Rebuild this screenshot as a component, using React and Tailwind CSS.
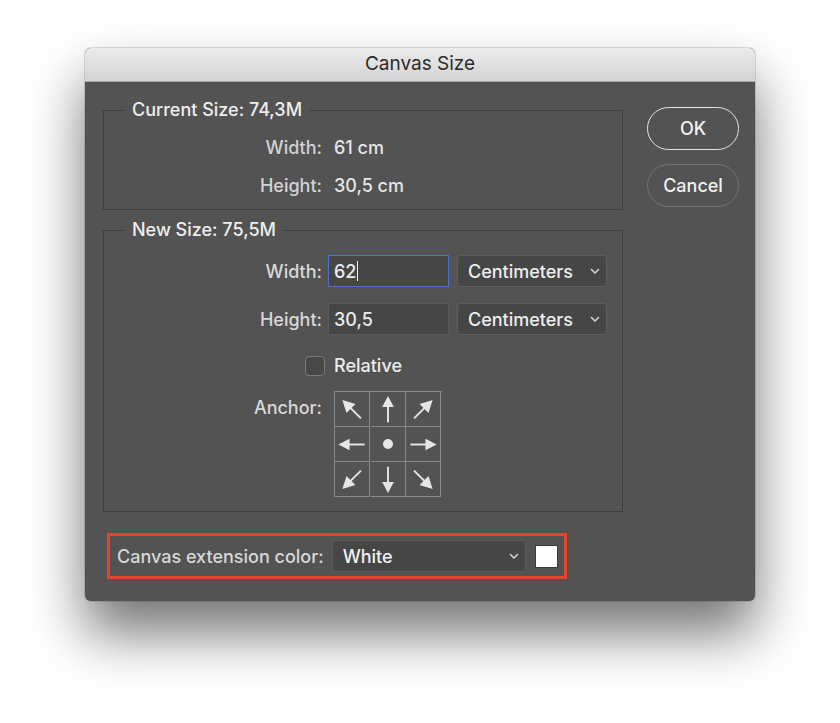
import React from "react";

function Arrow({ dir }) {
  const angles = { n: 0, ne: 45, e: 90, se: 135, s: 180, sw: 225, w: 270, nw: 315 };
  const a = angles[dir];
  const diag = dir.length === 2;
  const len = diag ? 13 : 13;
  const hw = diag ? 6.5 : 6;
  const hl = diag ? 11.5 : 10.5;
  return (
    <svg width="35" height="35" viewBox="-17.5 -17.5 35 35">
      <g transform={`rotate(${a})`} fill="#e6e6e6" stroke="#e6e6e6">
        <line x1="0" y1={len} x2="0" y2={-len + 7} strokeWidth="2" />
        <polygon points={`0,${-len - 1} ${-hw},${-len + hl} ${hw},${-len + hl}`} stroke="none" />
      </g>
    </svg>
  );
}

function Cell({ children }) {
  return (
    <div className="w-[35px] h-[35px] flex items-center justify-center border-r border-b border-[#8a8a8a]">
      {children}
    </div>
  );
}

function Chevron() {
  return (
    <svg width="10" height="7" viewBox="0 0 10 7">
      <path d="M1.5 1.5 L5 5 L8.5 1.5" fill="none" stroke="#d8d8d8" strokeWidth="1.5" strokeLinecap="round" strokeLinejoin="round" />
    </svg>
  );
}

export default function App() {
  const font = { fontFamily: 'Inter, "Liberation Sans", Arial, sans-serif' };
  return (
    <div className="w-[840px] h-[723px] bg-white overflow-hidden pt-[48px] pl-[85px]" style={font}>
      <div className="w-[670px] h-[553px] rounded-[6px] bg-[#535353] overflow-hidden shadow-[0_32px_55px_rgba(0,0,0,0.55),0_0_0_1px_rgba(0,0,0,0.12)] flex flex-col">
        <div className="h-[34px] shrink-0 bg-gradient-to-b from-[#ebebeb] to-[#d4d4d4] border-b border-[#a9a9a9] flex items-center justify-center text-[19px] text-[#2b2b2b]">
          Canvas Size
        </div>
        <div className="flex pl-[18px] pr-[16px] pt-[18px] font-medium">
          <div className="w-[520px] flex flex-col">
            <fieldset className="border border-[#3e3e3e] h-[110px] pl-0">
              <legend className="ml-[20px] px-[8px] text-[18px] leading-[20px] text-[#ededed]">Current Size: 74,3M</legend>
              <div className="flex flex-col gap-[18px] pt-[18px]">
                <div className="flex items-center text-[18px] leading-[20px]">
                  <span className="w-[218px] text-right text-[#d2d2d2]">Width:</span>
                  <span className="ml-[12px] text-[#e6e6e6]">61 cm</span>
                </div>
                <div className="flex items-center text-[18px] leading-[20px]">
                  <span className="w-[218px] text-right text-[#d2d2d2]">Height:</span>
                  <span className="ml-[12px] text-[#e6e6e6]">30,5 cm</span>
                </div>
              </div>
            </fieldset>
            <fieldset className="mt-[10px] border border-[#3e3e3e] h-[292px]">
              <legend className="ml-[20px] px-[8px] text-[18px] leading-[20px] text-[#ededed]">New Size: 75,5M</legend>
              <div className="flex flex-col pt-[15px]">
                <div className="flex items-center text-[18px]">
                  <span className="w-[218px] text-right text-[#d8d8d8]">Width:</span>
                  <div className="ml-[6px] w-[121px] h-[32px] bg-[#464646] border border-[#4a72c8] flex items-center pl-[5px] text-[#ececec]">
                    62<span className="inline-block w-[1px] h-[20px] bg-[#f0f0f0] ml-[1px]" />
                  </div>
                  <div className="ml-[8px] w-[150px] h-[32px] bg-[#464646] border border-[#5d5d5d] rounded-[3px] flex items-center justify-between pl-[10px] pr-[6px] text-[#ededed]">
                    <span>Centimeters</span>
                    <Chevron />
                  </div>
                </div>
                <div className="flex items-center text-[18px] mt-[16px]">
                  <span className="w-[218px] text-right text-[#d8d8d8]">Height:</span>
                  <div className="ml-[6px] w-[121px] h-[32px] bg-[#464646] border border-[#5a5a5a] flex items-center pl-[5px] text-[#ececec]">
                    30,5
                  </div>
                  <div className="ml-[8px] w-[150px] h-[32px] bg-[#464646] border border-[#5d5d5d] rounded-[3px] flex items-center justify-between pl-[10px] pr-[6px] text-[#ededed]">
                    <span>Centimeters</span>
                    <Chevron />
                  </div>
                </div>
                <div className="flex items-center mt-[17px] text-[18px]">
                  <div className="ml-[201px] w-[20px] h-[20px] rounded-[4px] bg-[#484848] border border-[#7a7a7a]" />
                  <span className="ml-[9px] text-[#ececec]">Relative</span>
                </div>
                <div className="flex items-start mt-[12px] text-[18px]">
                  <span className="w-[218px] text-right text-[#d8d8d8] mt-[3px]">Anchor:</span>
                  <div className="ml-[12px] grid grid-cols-3 border-l border-t border-[#8a8a8a] w-[108px]">
                    <Cell><Arrow dir="nw" /></Cell>
                    <Cell><Arrow dir="n" /></Cell>
                    <Cell><Arrow dir="ne" /></Cell>
                    <Cell><Arrow dir="w" /></Cell>
                    <Cell><div className="w-[10px] h-[10px] rounded-full bg-[#e6e6e6]" /></Cell>
                    <Cell><Arrow dir="e" /></Cell>
                    <Cell><Arrow dir="sw" /></Cell>
                    <Cell><Arrow dir="s" /></Cell>
                    <Cell><Arrow dir="se" /></Cell>
                  </div>
                </div>
              </div>
            </fieldset>
            <div className="mt-[21px] ml-[4px] w-[460px] h-[46px] border-[3px] border-[#e2472e] flex items-center text-[18px]">
              <span className="ml-[7px] text-[#d8d8d8]">Canvas extension color:</span>
              <div className="ml-[8px] w-[194px] h-[32px] bg-[#464646] border border-[#5d5d5d] rounded-[3px] flex items-center justify-between pl-[10px] pr-[6px] text-[#f0f0f0]">
                <span>White</span>
                <Chevron />
              </div>
              <div className="ml-[9px] w-[23px] h-[23px] bg-white border border-[#3a3a3a]" />
            </div>
          </div>
          <div className="ml-[24px] flex flex-col gap-[14px] pt-[7px]">
            <div className="w-[92px] h-[43px] rounded-full border-[1.5px] border-[#e4e4e4] flex items-center justify-center text-[18px] text-[#f2f2f2]">OK</div>
            <div className="w-[92px] h-[43px] rounded-full border-[1.5px] border-[#737373] flex items-center justify-center text-[18px] text-[#f0f0f0]">Cancel</div>
          </div>
        </div>
      </div>
    </div>
  );
}
